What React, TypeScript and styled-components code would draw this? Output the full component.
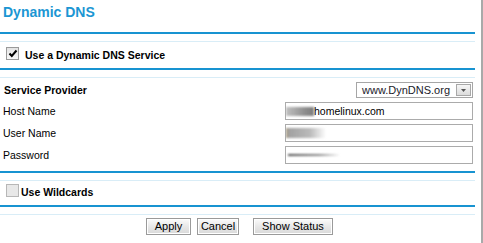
import styled, { createGlobalStyle } from "styled-components";

const GlobalStyle = createGlobalStyle`
  html, body {
    margin: 0;
    padding: 0;
    background: #ffffff;
  }
  body {
    font-family: "Liberation Sans", Arial, sans-serif;
  }
`;

const Frame = styled.div`
  width: 481px;
  height: 243px;
  border-right: 2px solid #a9a9a9;
  overflow: hidden;
`;

const Content = styled.div`
  width: 475px;
  display: flex;
  flex-direction: column;
`;

const Title = styled.h1`
  margin: 0;
  height: 32px;
  box-sizing: border-box;
  padding: 4px 3px 0;
  font-size: 14px;
  line-height: 16px;
  font-weight: bold;
  color: #1b96d3;
`;

const Divider = styled.div`
  height: 10px;
  box-sizing: border-box;
  border-top: 2px solid #1893d1;
  border-bottom: 1px solid #d9edf7;
  flex-shrink: 0;
`;

const CheckRow = styled.label<{ $top: number; $gap: number }>`
  display: flex;
  align-items: flex-end;
  gap: ${(p) => p.$gap}px;
  padding: ${(p) => p.$top}px 0 8px 6px;
  font-size: 10.5px;
  line-height: 12px;
  font-weight: bold;
  color: #000;
`;

const CheckText = styled.span`
  position: relative;
  top: 1px;
`;

const Box = styled.span<{ $checked?: boolean }>`
  display: flex;
  align-items: center;
  justify-content: center;
  width: 13px;
  height: 13px;
  box-sizing: border-box;
  border: 1px solid ${(p) => (p.$checked ? "#9a9a9a" : "#b7b7b7")};
  background: ${(p) =>
    p.$checked ? "linear-gradient(#e4e4e4, #f8f8f8)" : "#e8e8e8"};
  flex-shrink: 0;
`;

const Form = styled.div`
  display: grid;
  grid-template-columns: 1fr auto;
  row-gap: 4px;
  align-items: center;
  padding: 4px 2px 7px 3px;
  height: 93px;
  box-sizing: border-box;
`;

const Label = styled.span<{ $bold?: boolean }>`
  font-size: 10.5px;
  font-weight: ${(p) => (p.$bold ? "bold" : "normal")};
  color: #000;
  padding-left: ${(p) => (p.$bold ? 1 : 0)}px;
`;

const Select = styled.div`
  justify-self: end;
  display: flex;
  align-items: center;
  justify-content: space-between;
  width: 117px;
  height: 16px;
  box-sizing: border-box;
  border: 1px solid #a6a6a6;
  background: #fff;
  padding: 0 1px 0 5px;
  font-size: 11px;
  color: #1a1a2a;
`;

const Arrow = styled.span`
  display: flex;
  align-items: center;
  justify-content: center;
  width: 15px;
  height: 12px;
  box-sizing: border-box;
  border: 1px solid #a8a8a8;
  background: linear-gradient(#f6f6f6, #dcdcdc);
`;

const Field = styled.div`
  justify-self: end;
  display: flex;
  align-items: center;
  width: 188px;
  height: 18px;
  box-sizing: border-box;
  border: 1px solid #ababab;
  background: #fff;
  font-size: 10.5px;
  color: #000;
  overflow: hidden;
`;

const Smudge = styled.span<{ $w: number; $h: number; $dark?: boolean }>`
  display: block;
  width: ${(p) => p.$w}px;
  height: ${(p) => p.$h}px;
  flex-shrink: 0;
  margin-left: ${(p) => (p.$dark ? 2 : 0)}px;
  background: ${(p) =>
    p.$dark
      ? "linear-gradient(to right, rgba(60,60,60,0.9), rgba(90,90,90,0.7) 60%, rgba(160,160,160,0))"
      : "linear-gradient(to right, rgba(140,140,140,0.55), rgba(120,120,120,0.85) 70%, rgba(110,110,110,0.9))"};
  filter: blur(1.2px);
`;

const FadeSmudge = styled(Smudge)`
  background: linear-gradient(
    to right,
    rgba(150, 130, 90, 0.8) 0px,
    rgba(130, 130, 130, 0.75) 3px,
    rgba(140, 140, 140, 0.6) 60%,
    rgba(180, 180, 180, 0)
  );
`;

const Buttons = styled.div`
  display: flex;
  justify-content: center;
  padding: 3px 0 0 4px;
`;

const Button = styled.button<{ $w: number; $ml: number }>`
  width: ${(p) => p.$w}px;
  height: 17px;
  margin-left: ${(p) => p.$ml}px;
  padding: 0;
  border: 1px solid #9a9a9a;
  box-shadow: inset 0 0 0 1px #ffffff;
  background: linear-gradient(#fbfbfb, #e6e6e6 55%, #d9d9d9);
  font-family: "Liberation Sans", Arial, sans-serif;
  font-size: 11px;
  line-height: 15px;
  color: #000;
  cursor: pointer;
`;

export default function App() {
  return (
    <Frame>
      <GlobalStyle />
      <Content>
        <Title>Dynamic DNS</Title>
        <Divider />
        <CheckRow $top={5} $gap={6}>
          <Box $checked>
            <svg width="10" height="9" viewBox="0 0 10 9">
              <path d="M1.5 4.5 L3.8 7 L8.5 1.5" fill="none" stroke="#000" strokeWidth="2" />
            </svg>
          </Box>
          <CheckText>Use a Dynamic DNS Service</CheckText>
        </CheckRow>
        <Divider />
        <Form>
          <Label $bold>Service Provider</Label>
          <Select>
            <span>www.DynDNS.org</span>
            <Arrow>
              <svg width="5" height="3" viewBox="0 0 5 3">
                <path d="M0 0 H5 L2.5 3 Z" fill="#555" />
              </svg>
            </Arrow>
          </Select>
          <Label>Host Name</Label>
          <Field>
            <Smudge $w={28} $h={9} />
            <span>homelinux.com</span>
          </Field>
          <Label>User Name</Label>
          <Field>
            <FadeSmudge $w={40} $h={10} />
          </Field>
          <Label>Password</Label>
          <Field>
            <Smudge $w={52} $h={2} $dark />
          </Field>
        </Form>
        <Divider />
        <CheckRow $top={3} $gap={2}>
          <Box />
          <CheckText>Use Wildcards</CheckText>
        </CheckRow>
        <Divider />
        <Buttons>
          <Button $w={45} $ml={0}>Apply</Button>
          <Button $w={42} $ml={6}>Cancel</Button>
          <Button $w={80} $ml={14}>Show Status</Button>
        </Buttons>
      </Content>
    </Frame>
  );
}
